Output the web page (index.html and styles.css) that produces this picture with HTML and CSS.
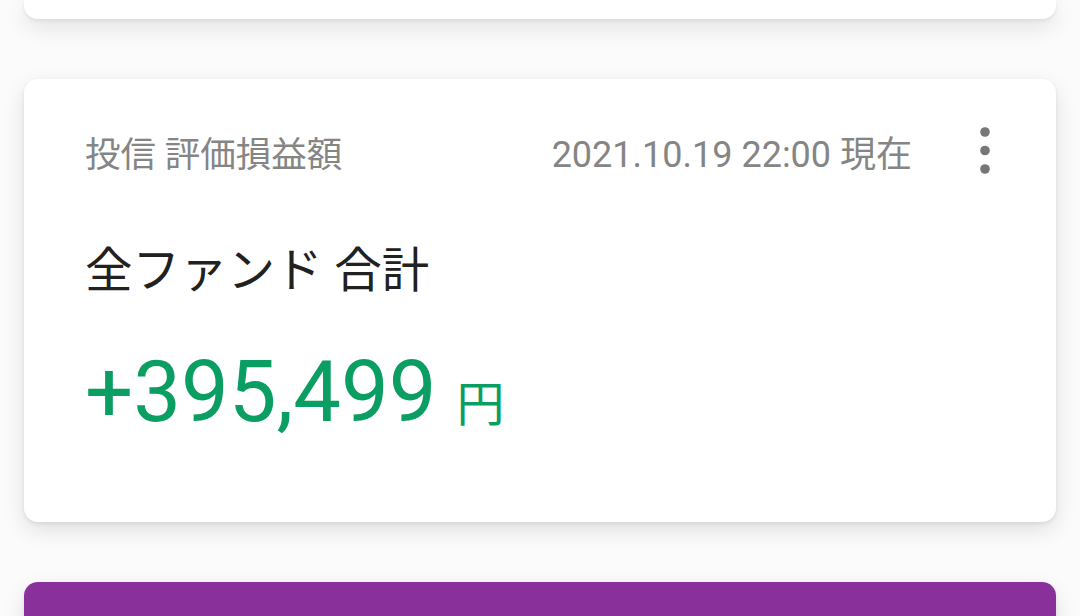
FILE: index.html
```html
<!DOCTYPE html>
<html lang="ja">
<head>
    <meta charset="UTF-8">
    <meta name="viewport" content="width=device-width, initial-scale=1.0">
    <title>投信 評価損益額</title>
    <link rel="stylesheet" href="styles.css">
</head>
<body>

<main class="cards">
    <div class="card card-prev"></div>

    <div class="card card-fund">
        <div class="card-head">
            <span class="card-label">投信 評価損益額</span>
            <span class="card-date">2021.10.19 22:00 現在</span>
            <button class="kebab" aria-label="メニュー">
                <svg width="12" height="48" viewBox="0 0 12 48">
                    <circle cx="6" cy="5" r="4.8" fill="#777"/>
                    <circle cx="6" cy="23.5" r="4.8" fill="#777"/>
                    <circle cx="6" cy="42" r="4.8" fill="#777"/>
                </svg>
            </button>
        </div>
        <div class="fund-title">全ファンド 合計</div>
        <div class="fund-amount">
            <span class="amount-value">+395,499</span>
            <span class="amount-unit">円</span>
        </div>
    </div>

    <div class="card card-next"></div>
</main>

</body>
</html>
```

FILE: styles.css
```css
body {
    font-family: Roboto, "Noto Sans CJK JP", sans-serif;
    margin: 0;
    padding: 0;
    background-color: #fbfbfb;
    overflow: hidden;
}
.cards {
    display: flex;
    flex-direction: column;
    gap: 60px;
    padding: 0 24px;
}
.card {
    background-color: #ffffff;
    border-radius: 14px;
    box-shadow: 0 8px 22px rgba(0, 0, 0, 0.11), 0 2px 4px rgba(0, 0, 0, 0.07);
}
.card-prev {
    height: 19px;
    border-radius: 0 0 14px 14px;
}
.card-next {
    height: 60px;
    background-color: #89309b;
}
.card-fund {
    padding: 52px 47px 80px 61px;
}
.card-head {
    display: flex;
    align-items: center;
    height: 40px;
}
.card-label {
    flex: 1;
    font-size: 35.5px;
    color: #858585;
}
.card-date {
    font-size: 36px;
    color: #858585;
}
.kebab {
    width: 48px;
    height: 48px;
    margin-left: 49px;
    padding: 0;
    border: none;
    background: none;
    display: flex;
    justify-content: center;
    align-items: center;
}
.fund-title {
    margin-top: 72px;
    height: 56px;
    line-height: 56px;
    font-size: 47.5px;
    color: #212121;
}
.fund-amount {
    margin-top: 43px;
    height: 100px;
    line-height: 100px;
    color: #0b9e62;
}
.amount-value {
    font-size: 85px;
}
.amount-unit {
    font-size: 48px;
    margin-left: 16px;
}
```
